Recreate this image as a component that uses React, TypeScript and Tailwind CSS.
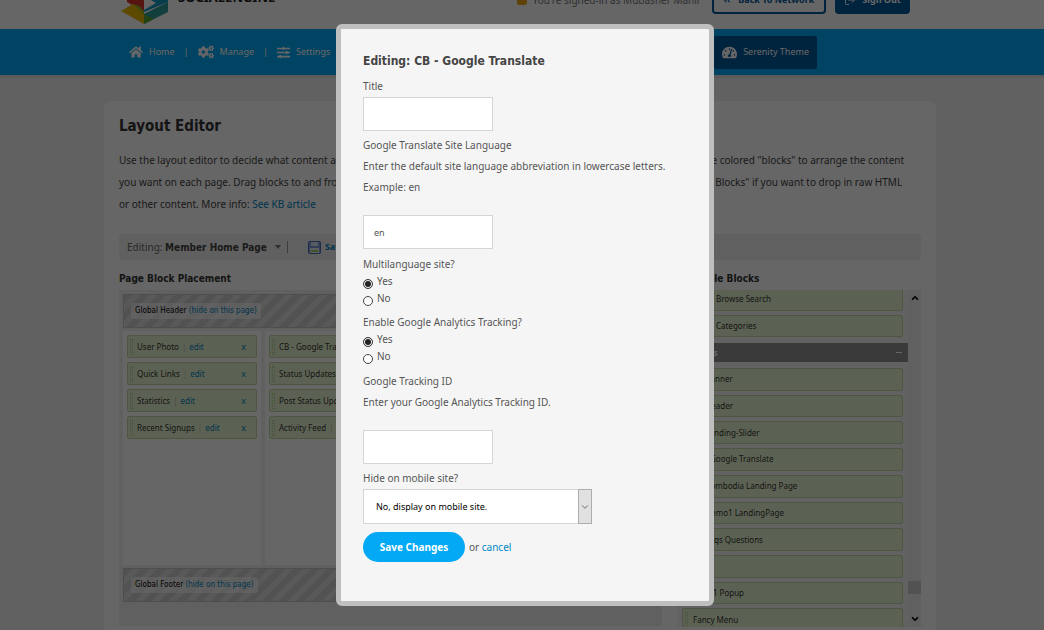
import type { ReactNode } from 'react';
import { FaCogs, FaHome, FaSlidersH, FaTachometerAlt } from 'react-icons/fa';
import { ChevronDown, ChevronUp, LogOut } from 'lucide-react';

const userBlocks = ['User Photo', 'Quick Links', 'Statistics', 'Recent Signups'];
const feedBlocks = ['CB - Google Translate', 'Status Updates', 'Post Status Updates', 'Activity Feed'];
const blogBlocks = ['Blogs Browse Search', 'Blogs Categories'];
const widgetBlocks = [
  'CB Banner',
  'CB Header',
  'CB Landing-Slider',
  'CB - Google Translate',
  'CB Combodia Landing Page',
  'CB Demo1 LandingPage',
  'CB Faqs Questions',
  'Code',
  'Type 1 Popup',
  'Fancy Menu',
];

function Logo() {
  return (
    <svg viewBox="0 0 50 56" className="h-[56px] w-[50px]" aria-hidden="true">
      <path d="M25 2 L49 16 L25 20 L1 16Z" fill="#f5642d" />
      <path d="M8 16 L25 8 L25 43 L8 33Z" fill="#d8352a" />
      <path d="M25 8 L49 16 L49 33 L25 43Z" fill="#1598c4" />
      <path d="M25 27 L37 34 L25 41Z" fill="#ffffff" />
      <path d="M2 42 L14 35 L25 42 L25 55Z" fill="#e8b800" />
      <path d="M14 35 L20 37 L25 42 L25 46Z" fill="#9ab52c" />
      <path d="M25 45 L49 33 L49 43 L25 55Z" fill="#2f9c9c" />
      <path d="M25 45 L35 50 L25 55Z" fill="#57a639" />
    </svg>
  );
}

function SaveIcon() {
  return (
    <svg viewBox="0 0 13 13" className="size-[13px]" aria-hidden="true">
      <rect x="0.5" y="0.5" width="12" height="12" rx="1" fill="#7f9fdc" stroke="#4a6cb4" />
      <rect x="3" y="1" width="7" height="4" fill="#dfe9fb" />
      <rect x="2" y="7" width="9" height="5" fill="#e8eefb" />
      <rect x="3" y="9" width="7" height="2" fill="#9fcf5a" />
    </svg>
  );
}

function NavItem({ icon, label }: { icon: ReactNode; label: string }) {
  return (
    <a href="#" className="flex items-center gap-1.5 text-white">
      {icon}
      {label}
    </a>
  );
}

function Grip() {
  return <span className="h-4 w-[3px] border-x border-dotted border-[#b3cc94]" />;
}

function PlacedBlock({ name }: { name: string }) {
  return (
    <li className="flex h-[23px] items-center rounded-xs border border-[#c3d8a6] bg-[#e7f5cf] pr-2.5 pl-0.5 text-[8px] whitespace-nowrap text-[#333]">
      <Grip />
      <span className="ml-1">{name}</span>
      <span className="mx-[3px] text-[#bbb]">|</span>
      <a href="#" className="text-[#0084c4]">edit</a>
      <a href="#" className="ml-auto text-[9px] text-[#0084c4]">x</a>
    </li>
  );
}

function AvailableBlock({ name }: { name: string }) {
  return (
    <li className="flex min-h-0 items-center rounded-xs border border-[#c3d8a6] bg-[#e7f5cf] pl-0.5 text-[8px] whitespace-nowrap text-[#333]">
      <Grip />
      <span className="ml-[5px]">{name}</span>
    </li>
  );
}

function GlobalBar({ name }: { name: string }) {
  return (
    <div className="flex h-[34px] items-center border border-[#c4c4c4] bg-[repeating-linear-gradient(135deg,#cecece_0px,#cecece_6px,#dedede_6px,#dedede_12px)] pl-[7px]">
      <span className="rounded-xs bg-white/60 px-1 font-['DejaVu_Sans_Condensed','DejaVu_Sans',sans-serif] text-[8px] leading-4 text-black">
        {name} <a href="#" className="text-[#0084c4]">(hide on this page)</a>
      </span>
    </div>
  );
}

function Header() {
  return (
    <header className="flex h-[29px] items-end overflow-hidden bg-white pr-[134px] pl-[119px] text-[10px] text-[#555]">
      <div className="flex items-end gap-[9px] pb-1">
        <Logo />
        <span className="pb-[19px] text-[13px] leading-[18px] font-bold text-[#222]">SOCIALENGINE</span>
      </div>
      <div className="ml-auto flex items-center gap-[9px] pb-[15px]">
        <p className="mr-0.5 flex items-center gap-1.5 text-[#777]">
          <span className="size-[10px] rounded-xs bg-[#f0a818]" />
          You're signed-in as Mubasher Manir
        </p>
        <button className="flex h-[28px] w-[114px] items-center justify-center gap-2 rounded-sm border-2 border-[#01579b] bg-white text-[9px] font-bold whitespace-nowrap text-[#01579b]">
          <span>‹‹</span> Back To Network
        </button>
        <button className="flex h-[28px] w-[75px] items-center justify-center gap-1.5 rounded-sm bg-[#01579b] text-[9px] font-bold whitespace-nowrap text-white">
          <LogOut className="size-3" /> Sign Out
        </button>
      </div>
    </header>
  );
}

function Nav() {
  return (
    <nav className="flex h-[46px] items-center gap-[9px] bg-[#03a9f4] pr-[227px] pl-[129px] text-[9px] text-white shadow-[0_3px_0_#e0e0e0]">
      <NavItem icon={<FaHome className="size-[14px]" />} label="Home" />
      <span>|</span>
      <NavItem icon={<FaCogs className="size-4" />} label="Manage" />
      <span>|</span>
      <NavItem icon={<FaSlidersH className="size-[13px]" />} label="Settings" />
      <a href="#" className="ml-auto flex h-[33px] items-center gap-1.5 rounded-xs bg-[#01579b] px-2">
        <FaTachometerAlt className="size-[15px]" />
        Serenity Theme
      </a>
    </nav>
  );
}

function LayoutEditor() {
  return (
    <main className="mt-[26px] mr-[108px] ml-[104px] rounded-lg bg-white px-[15px] pt-3.5 pb-6 text-[#444]">
      <h1 className="font-['DejaVu_Sans_Condensed','DejaVu_Sans',sans-serif] text-[15px] leading-[22px] font-bold text-[#333]">Layout Editor</h1>
      <p className="mt-3 text-[10px] leading-[22px] whitespace-nowrap">
        Use the layout editor to decide what content appears on every page of your social network and where it is located. Just drag the colored "blocks" to arrange the content
        <br />
        you want on each page. Drag blocks to and from the "Available Blocks" area on the right to build each of the pages. Use "HTML Blocks" if you want to drop in raw HTML
        <br />
        or other content. More info: <a href="#" className="text-[#0084c4]">See KB article</a>
      </p>

      <div className="mt-[19px] flex h-[26px] items-center rounded-sm bg-[#f0f0f0] px-2 text-[10px] text-[#666]">
        <button className="flex items-center gap-1">
          <span>Editing: <b className="font-['DejaVu_Sans_Condensed','DejaVu_Sans',sans-serif] text-[#444]">Member Home Page</b></span>
          <span className="ml-1 border-x-[3px] border-t-4 border-x-transparent border-t-[#777]" />
        </button>
        <span className="ml-1.5 h-3 border-l border-[#999]" />
        <button className="ml-5 flex items-center gap-1 text-[9px] font-bold text-[#0084c4]">
          <SaveIcon /> Save Changes
        </button>
      </div>

      <div className="mt-2.5 flex gap-[15px]">
        <section className="min-w-0 flex-1">
          <h2 className="font-['DejaVu_Sans_Condensed','DejaVu_Sans',sans-serif] text-[10px] leading-[18px] font-bold text-[#333]">Page Block Placement</h2>
          <div className="mt-0.5 bg-[#f0f0f0] px-1 pt-1 pb-6">
            <GlobalBar name="Global Header" />
            <div className="my-[3px] flex h-[234px] gap-1">
              <ul className="flex w-[138px] flex-col gap-1 bg-white px-1 py-1">
                {userBlocks.map((name) => <PlacedBlock key={name} name={name} />)}
              </ul>
              <ul className="flex flex-1 flex-col gap-1 bg-white px-1 py-1">
                {feedBlocks.map((name) => <PlacedBlock key={name} name={name} />)}
              </ul>
            </div>
            <GlobalBar name="Global Footer" />
          </div>
        </section>

        <section className="w-[244px]">
          <h2 className="font-['DejaVu_Sans_Condensed','DejaVu_Sans',sans-serif] text-[10px] leading-[18px] font-bold text-[#333]">Available Blocks</h2>
          <div className="mt-0.5 flex h-[337px] overflow-hidden bg-[#f6f6f6]">
            <div className="flex min-w-0 flex-1 flex-col justify-end pl-[5px]">
              <ul className="grid h-[49px] shrink-0 auto-rows-fr gap-1 pr-[5px]">
                {blogBlocks.map((name) => <AvailableBlock key={name} name={name} />)}
              </ul>
              <h3 className="mt-1.5 flex h-[19px] shrink-0 items-center justify-between bg-[#919191] pr-1.5 pl-[3px] text-[8px] font-bold text-white">
                Widgets <span className="h-px w-1.5 bg-white" />
              </h3>
              <ul className="mt-1.5 -mb-1 grid h-[263px] shrink-0 auto-rows-fr gap-1 pr-[5px]">
                {widgetBlocks.map((name) => <AvailableBlock key={name} name={name} />)}
              </ul>
            </div>
            <div className="flex w-[13px] flex-col items-center bg-[#efefef] text-black">
              <ChevronUp className="mt-[3px] size-2.5" strokeWidth={4} />
              <span className="mt-auto h-[13px] w-full bg-[#cdcdcd]" />
              <ChevronDown className="mt-5 mb-[3px] size-2.5" strokeWidth={4} />
            </div>
          </div>
        </section>
      </div>
    </main>
  );
}

function TextField({ id, label, help, defaultValue }: { id: string; label: string; help?: ReactNode; defaultValue?: string }) {
  return (
    <>
      <label htmlFor={id} className="block leading-[21px]">{label}</label>
      {help && <p className="mb-[17px] leading-[21px]">{help}</p>}
      <input
        id={id}
        type="text"
        defaultValue={defaultValue}
        className="block h-[34px] w-[130px] border border-[#d5d5d5] bg-white px-2.5 text-[9px]"
      />
    </>
  );
}

function YesNo({ name, legend }: { name: string; legend: string }) {
  return (
    <fieldset className="mt-[6px]">
      <legend className="leading-[18px]">{legend}</legend>
      {['Yes', 'No'].map((option) => (
        <label key={option} className="flex h-[17px] items-center gap-1">
          <input
            type="radio"
            name={name}
            defaultChecked={option === 'Yes'}
            className="mt-1 size-[10px] appearance-none rounded-full border border-[#444] bg-white checked:bg-[#222] checked:shadow-[inset_0_0_0_1px_white]"
          />
          {option}
        </label>
      ))}
    </fieldset>
  );
}

function EditDialog() {
  return (
    <div className="fixed inset-0 flex items-start justify-center bg-black/60 pt-6 pl-1.5">
      <form
        role="dialog"
        aria-label="Editing: CB - Google Translate"
        className="w-[378px] rounded-md border-[5px] border-[#bfbfbf] bg-[#f5f5f5] px-[22px] pt-5 pb-[39px] text-[10px] text-[#555]"
      >
        <h2 className="mb-[3px] font-['DejaVu_Sans_Condensed','DejaVu_Sans',sans-serif] text-[12px] leading-[24px] font-bold text-[#444]">Editing: CB - Google Translate</h2>
        <TextField id="title" label="Title" />
        <div className="mt-1">
          <TextField
            id="language"
            label="Google Translate Site Language"
            help={<>Enter the default site language abbreviation in lowercase letters.<br />Example: en</>}
            defaultValue="en"
          />
        </div>
        <YesNo name="multilanguage" legend="Multilanguage site?" />
        <YesNo name="analytics" legend="Enable Google Analytics Tracking?" />
        <div className="mt-[6px]">
          <TextField id="tracking" label="Google Tracking ID" help="Enter your Google Analytics Tracking ID." />
        </div>
        <label htmlFor="mobile" className="mt-1 block leading-[21px]">Hide on mobile site?</label>
        <div className="relative w-[229px]">
          <select id="mobile" className="block h-[35px] w-full appearance-none border border-[#d5d5d5] bg-white pl-3 text-[9px] text-black">
            <option>No, display on mobile site.</option>
            <option>Yes, hide on mobile site.</option>
          </select>
          <span className="pointer-events-none absolute inset-y-0 right-0 flex w-[14px] items-center justify-center border border-[#adadad] bg-[#e1e1e1]">
            <ChevronDown className="size-2.5" />
          </span>
        </div>
        <div className="mt-2 flex items-center gap-1">
          <button type="button" className="h-[30px] w-[102px] rounded-full bg-[#03a9f4] text-[10px] font-bold text-white">Save Changes</button>
          <span>or <a href="#" className="text-[#0087c3]">cancel</a></span>
        </div>
      </form>
    </div>
  );
}

export default function App() {
  return (
    <div className="h-screen overflow-hidden bg-[#f3f3f3] font-['Noto_Sans','DejaVu_Sans',sans-serif]">
      <Header />
      <Nav />
      <LayoutEditor />
      <EditDialog />
    </div>
  );
}
